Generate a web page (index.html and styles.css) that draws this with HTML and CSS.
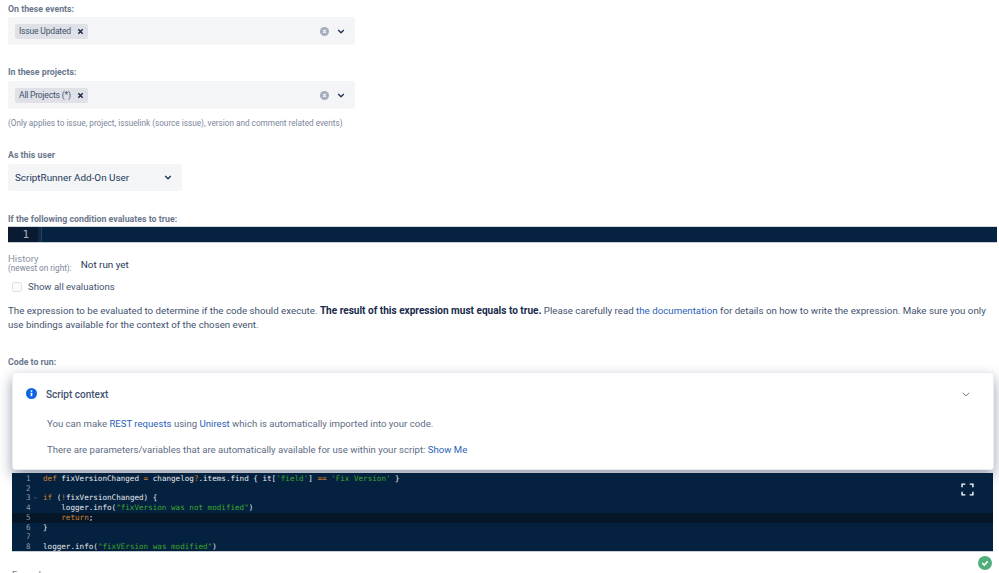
FILE: index.html
```html
<!DOCTYPE html>
<html lang="en">
<head>
<meta charset="utf-8">
<title>Script Listener</title>
<link rel="stylesheet" href="styles.css">
</head>
<body>
<main class="page">
  <label class="label label-first">On these events:</label>
  <div class="select select-wide">
    <span class="tag">Issue Updated <svg class="tag-x" viewBox="0 0 8 8"><path d="M1.5 1.5l5 5M6.5 1.5l-5 5"/></svg></span>
    <span class="select-icons">
      <svg class="clear" viewBox="0 0 10 10"><circle cx="5" cy="5" r="5"/><path d="M3.3 3.3l3.4 3.4M6.7 3.3l-3.4 3.4"/></svg>
      <svg class="chev" viewBox="0 0 10 6"><path d="M1.5 1l3.5 3.5L8.5 1"/></svg>
    </span>
  </div>
  <label class="label label-projects">In these projects:</label>
  <div class="select select-wide">
    <span class="tag">All Projects (*) <svg class="tag-x" viewBox="0 0 8 8"><path d="M1.5 1.5l5 5M6.5 1.5l-5 5"/></svg></span>
    <span class="select-icons">
      <svg class="clear" viewBox="0 0 10 10"><circle cx="5" cy="5" r="5"/><path d="M3.3 3.3l3.4 3.4M6.7 3.3l-3.4 3.4"/></svg>
      <svg class="chev" viewBox="0 0 10 6"><path d="M1.5 1l3.5 3.5L8.5 1"/></svg>
    </span>
  </div>
  <p class="hint">(Only applies to issue, project, issuelink (source issue), version and comment related events)</p>
  <label class="label label-user">As this user</label>
  <div class="select select-user">
    <span class="select-value">ScriptRunner Add-On User</span>
    <svg class="chev" viewBox="0 0 10 6"><path d="M1.5 1l3.5 3.5L8.5 1"/></svg>
  </div>
  <label class="label label-condition">If the following condition evaluates to true:</label>
  <div class="condition-editor">
    <div class="condition-gutter">1</div>
  </div>
  <div class="history">
    <div class="history-label">History<small>(newest on right):</small></div>
    <div class="history-value">Not run yet</div>
  </div>
  <div class="check-row"><span class="checkbox"></span>Show all evaluations</div>
  <p class="desc">The expression to be evaluated to determine if the code should execute. <b>The result of this expression must equals to true.</b> Please carefully read <a href="#">the documentation</a> for details on how to write the expression. Make sure you only use bindings available for the context of the chosen event.</p>
  <label class="label label-code">Code to run:</label>
  <section class="panel">
    <div class="panel-head">
      <svg class="info" viewBox="0 0 12 12"><circle cx="6" cy="6" r="6"/><rect class="info-mark" x="5.1" y="5.2" width="1.8" height="3.9" rx=".4"/><circle class="info-mark" cx="6" cy="3.4" r="1"/></svg>
      <span class="panel-title">Script context</span>
      <svg class="panel-chev" viewBox="0 0 12 7"><path d="M1 1l5 4.5L11 1"/></svg>
    </div>
    <p class="panel-line">You can make <a href="#">REST requests</a> using <a href="#">Unirest</a> which is automatically imported into your code.</p>
    <p class="panel-line">There are parameters/variables that are automatically available for use within your script: <a href="#">Show Me</a></p>
  </section>
  <div class="code-editor">
    <svg class="fullscreen" viewBox="0 0 12 12"><path d="M1 4V1h3M8 1h3v3M11 8v3H8M4 11H1V8"/></svg>
    <div class="code-line"><span class="ln">1</span><code><i class="k">def</i> fixVersionChanged <i class="k">=</i> changelog<i class="k">?</i>.items.find { it[<i class="s">'field'</i>] <i class="k">==</i> <i class="s">'Fix Version'</i> }</code></div>
    <div class="code-line"><span class="ln">2</span><code></code></div>
    <div class="code-line"><span class="ln">3<em class="fold">-</em></span><code><i class="k">if</i> (<i class="k">!</i>fixVersionChanged) {</code></div>
    <div class="code-line"><span class="ln">4</span><code>    logger.info(<i class="s">"fixVersion was not modified"</i>)</code></div>
    <div class="code-line code-active"><span class="ln">5</span><code>    <i class="k">return</i>;</code></div>
    <div class="code-line"><span class="ln">6</span><code>}</code></div>
    <div class="code-line"><span class="ln">7</span><code></code></div>
    <div class="code-line"><span class="ln">8</span><code>logger.info(<i class="s">"fixVErsion was modified"</i>)</code></div>
  </div>
  <div class="status"><svg class="status-ok" viewBox="0 0 14 14"><circle cx="7" cy="7" r="7"/><path d="M4.3 7.2l2 1.9 3.4-3.7"/></svg></div>
  <label class="label label-last">Examples</label>
</main>
</body>
</html>
```
FILE: styles.css
```css
html, body {
  margin: 0;
  padding: 0;
  height: 573px;
  overflow: hidden;
  background: #fff;
}
.page {
  font-family: Roboto, "Open Sans", sans-serif;
  font-size: 9.9px;
  line-height: 14px;
  color: #42526e;
  padding: 0 6px 0 8px;
}
.label {
  display: block;
  font-size: 8.8px;
  font-weight: 700;
  line-height: 12px;
  color: #6b778c;
}
.label-first { padding: 3px 0 2px; }
.label-projects { margin-top: 21px; padding-bottom: 3px; }
.label-user { margin-top: 20px; padding-bottom: 3px; }
.label-condition { margin-top: 22px; padding-bottom: 2px; }
.label-code { margin-top: 24px; padding-bottom: 4px; }
.select {
  display: flex;
  align-items: center;
  background: #f4f5f7;
  border-radius: 3px;
  box-sizing: border-box;
}
.select-wide {
  width: 347px;
  height: 28px;
  padding: 0 7px;
  justify-content: space-between;
}
.select-user {
  width: 174px;
  height: 27px;
  padding: 0 10px 0 7px;
  justify-content: space-between;
}
.select-value { font-size: 9.9px; color: #253858; }
.tag {
  display: flex;
  align-items: center;
  gap: 6px;
  height: 15px;
  padding: 0 4px 0 4px;
  background: #dfe1e6;
  border-radius: 2px;
  font-size: 8.6px;
  letter-spacing: -0.22px;
  color: #42526e;
}
.tag-x { width: 7px; height: 7px; fill: none; stroke: #172b4d; stroke-width: 1.7; }
.select-icons { display: flex; align-items: center; gap: 8px; padding-right: 3px; }
.clear { width: 9px; height: 9px; }
.clear circle { fill: #a5adba; }
.clear path { fill: none; stroke: #f4f5f7; stroke-width: 1.2; }
.chev { width: 8px; height: 5px; fill: none; stroke: #253858; stroke-width: 1.8; }
.hint { margin: 8px 0 0; font-size: 8.2px; line-height: 12px; color: #7a869a; }
.condition-editor {
  height: 15px;
  margin-right: -4px;
  background: #052341;
  border-top: 1px solid #d5d8de;
  border-bottom: 1px solid #c8ccd3;
  margin-top: -1px;
}
.condition-gutter {
  width: 30px;
  height: 15px;
  box-sizing: border-box;
  padding-right: 9px;
  text-align: right;
  background: #0a1a30;
  box-shadow: 3px 0 0 #0d2a48, 4px 0 0 #2a3f58;
  color: #a9b2bd;
  font: 11px/15px "DejaVu Sans Mono", monospace;
}
.history { display: flex; align-items: center; gap: 9px; margin-top: 10px; }
.history-label { font-size: 9.6px; line-height: 11px; color: #8993a4; }
.history-label small { display: block; font-size: 8.2px; line-height: 9px; color: #7a869a; }
.history-value { font-size: 9.9px; color: #253858; padding-top: 4px; }
.check-row { display: flex; align-items: center; gap: 6px; padding-left: 4px; margin-top: 6px; height: 16px; font-size: 9.55px; }
.checkbox { width: 8px; height: 8px; border: 1px solid #dfe1e6; border-radius: 2px; background: #fafbfc; }
.desc { margin: 9px 0 0; font-size: 9.72px; line-height: 14px; color: #42526e; }
.desc b { color: #172b4d; font-size: 10.05px; }
a { color: #2a5fb8; text-decoration: none; }
.panel {
  box-sizing: border-box;
  height: 98px;
  width: 982px;
  margin-left: 4px;
  padding: 13px 14px 0 13px;
  background: #fff;
  border-radius: 3px;
  border: 1px solid #ebecf0;
  box-shadow: 0 6px 14px rgba(9, 30, 66, 0.42);
  position: relative;
}
.panel-head { display: flex; align-items: center; height: 14px; }
.info { width: 11px; height: 11px; margin-right: 9px; fill: #0c66e4; }
.info-mark { fill: #fff; }
.panel-title { font-size: 10px; font-weight: 500; color: #42526e; flex: 1; padding-top: 3px; }
.panel-chev { width: 8px; height: 5px; margin-right: 9px; margin-top: 3px; fill: none; stroke: #5e6c84; stroke-width: 1.3; }
.panel-line { margin: 0; padding-left: 21px; font-size: 9.6px; line-height: 14px; color: #5e6c84; }
.panel-head + .panel-line { margin-top: 17px; }
.panel-line + .panel-line { margin-top: 12px; }
.code-editor {
  position: relative;
  box-sizing: border-box;
  width: 981px;
  height: 79px;
  margin: 3px 0 0 4px;
  padding-top: 1px;
  background: #04213f;
  border-bottom: 1px solid #c8ccd3;
  font: 7.6px/9.72px "DejaVu Sans Mono", monospace;
  color: #e8eaed;
}
.fullscreen {
  position: absolute;
  top: 10px;
  right: 19px;
  width: 13px;
  height: 13px;
  fill: none;
  stroke: #fff;
  stroke-width: 1.3;
}
.code-line { display: flex; height: 9.72px; }
.code-active { background: #051629; }
.ln { position: relative; flex: none; padding-left: 14px; box-sizing: border-box; width: 31px; color: #8b98a8; }
.fold { position: absolute; left: 21px; font-style: normal; color: #8b98a8; }
code { font: inherit; white-space: pre; }
.k { font-style: normal; color: #d0802a; }
.s { font-style: normal; color: #3fa62a; }
.status { display: flex; justify-content: flex-end; height: 18px; padding: 4px 0 0; margin-right: 1px; }
.status-ok { width: 14px; height: 14px; }
.status-ok circle { fill: #4fae7b; }
.status-ok path { fill: none; stroke: #fff; stroke-width: 1.6; }
.label-last { font-weight: 400; margin-top: -5px; padding-left: 4px; }
```
